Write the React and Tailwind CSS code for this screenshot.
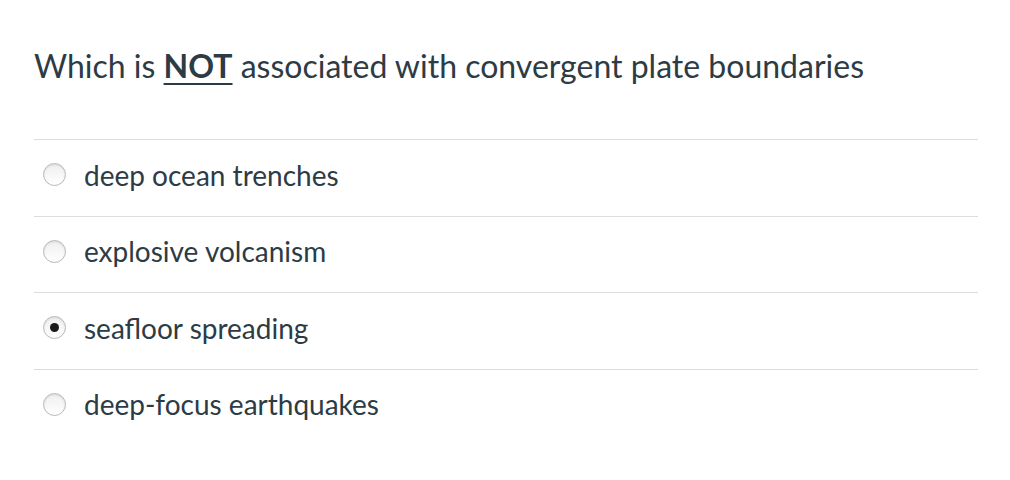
import React from "react";

const options = [
  { label: "deep ocean trenches", checked: false },
  { label: "explosive volcanism", checked: false },
  { label: "seafloor spreading", checked: true },
  { label: "deep-focus earthquakes", checked: false },
];

function Radio({ checked }) {
  return (
    <span className="flex h-[23px] w-[23px] items-center justify-center rounded-full border border-[#b9b9b9] bg-gradient-to-b from-[#efefef] to-white shadow-[inset_0_1px_2px_rgba(0,0,0,0.1)]">
      {checked && <span className="h-[9px] w-[9px] rounded-full bg-[#1a1a1a]" />}
    </span>
  );
}

export default function App() {
  return (
    <div
      className="h-[480px] w-[1010px] bg-white text-[#2d3b45]"
      style={{ fontFamily: "Lato, 'Open Sans', sans-serif" }}
    >
      <div className="pl-[34px] pt-[44px]">
        <h1 className="text-[32px] leading-[44px] font-normal">
          Which is <span className="font-bold underline underline-offset-[5px] decoration-[2px]">NOT</span> associated with convergent plate boundaries
        </h1>
        <div className="mt-[51px] w-[944px]">
          {options.map((o) => (
            <div
              key={o.label}
              className="flex h-[76.5px] items-center gap-[18px] border-t border-[#dddddd] pb-[6px] pl-[9px]"
            >
              <Radio checked={o.checked} />
              <span className="text-[28px] leading-none">{o.label}</span>
            </div>
          ))}
        </div>
      </div>
    </div>
  );
}
